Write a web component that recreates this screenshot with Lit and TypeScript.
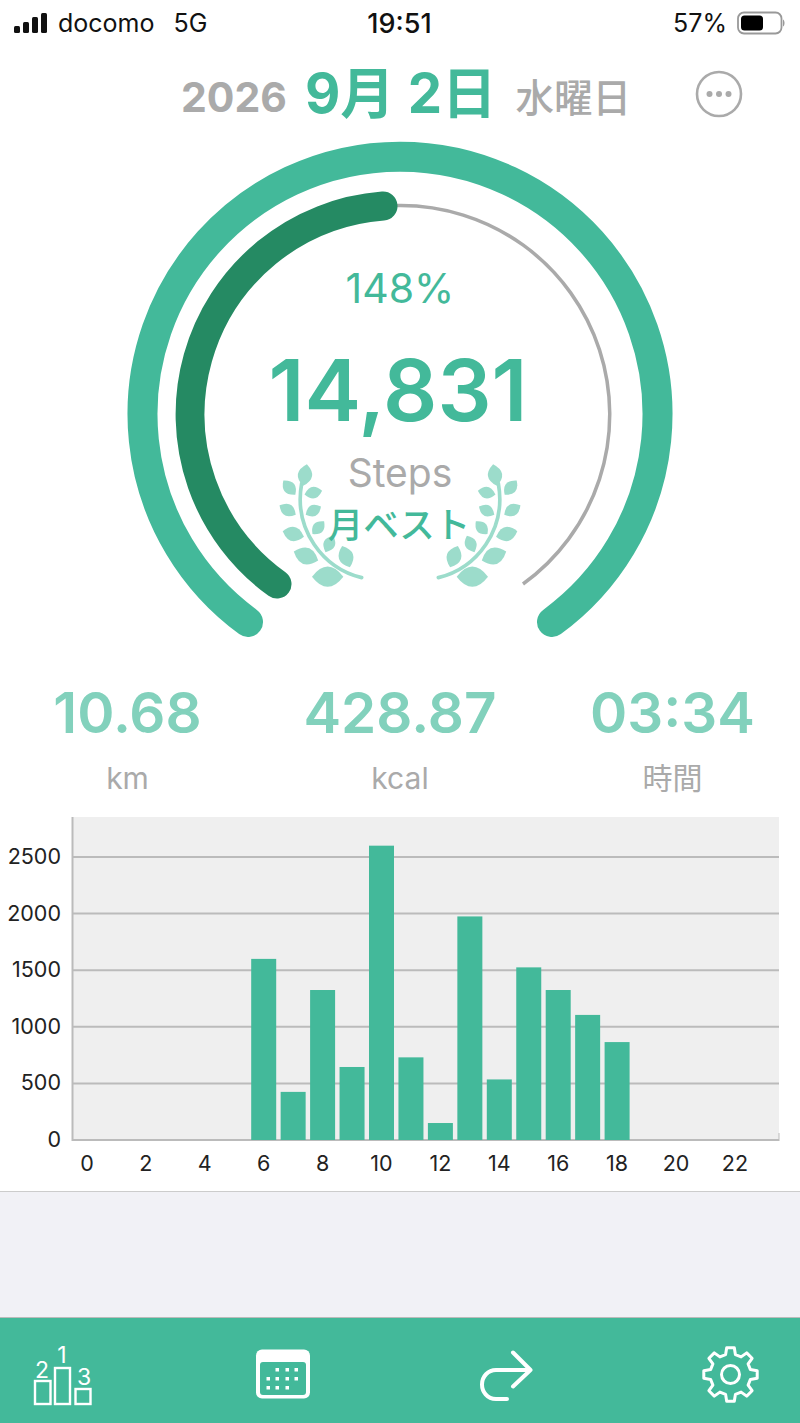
import { LitElement, html, css, svg } from "lit";
import { customElement } from "lit/decorators.js";

const BARS: [number, number][] = [[6,1600],[7,425],[8,1325],[9,645],[10,2600],[11,730],[12,150],[13,1975],[14,535],[15,1525],[16,1325],[17,1105],[18,865]];
const BASE = 1140;
const PER = 56.6 / 500;
const X0 = 87;
const STEP = 29.45;

const LEAVES: [number, number, number, number][] = [
  [135,105,33,-80],[88,143,28,50],[160,158,27,-12],[83,210,28,30],[160,212,26,-28],
  [100,282,33,15],[175,263,26,-48],[138,348,39,20],[208,312,27,-65],[258,350,34,70],[203,410,47,0],
];

function gearPath(cx: number, cy: number): string {
  const pts: string[] = [];
  const teeth = 8;
  const ro = 27;
  const ri = 20.5;
  for (let i = 0; i < teeth; i++) {
    const a = (i / teeth) * Math.PI * 2 - Math.PI / 2;
    const w = Math.PI / teeth;
    const at = (r: number, t: number) => `${(cx + r * Math.cos(t)).toFixed(1)} ${(cy + r * Math.sin(t)).toFixed(1)}`;
    pts.push(`${i ? "L" : "M"}${at(ri, a - w * 0.62)}`, `L${at(ro, a - w * 0.36)}`, `L${at(ro, a + w * 0.36)}`, `L${at(ri, a + w * 0.62)}`);
  }
  return pts.join(" ") + " Z";
}

@customElement("app-root")
export class AppRoot extends LitElement {
  static styles = css`
    :host { display: block; width: 800px; height: 1423px; background: #fff; overflow: hidden;
      font-family: Inter, "Noto Sans CJK JP", sans-serif; }
    svg { display: block; }
    .status { height: 46px; display: grid; grid-template-columns: 1fr auto 1fr; align-items: center; padding: 0 15px 0 14px; color: #111; font-size: 25px; }
    .st-left, .st-right { display: flex; align-items: center; }
    .st-left { gap: 10px; }
    .st-right { justify-content: flex-end; gap: 10px; }
    .carrier { margin-right: 9px; }
    .time { font-weight: 500; font-size: 27px; }
    .date { height: 84px; box-sizing: border-box; display: flex; align-items: center; padding: 12px 0 0 181px; }
    .year { font-size: 41px; font-weight: 700; color: #aaa; margin-top: 6px; }
    .day { font-size: 54.5px; font-weight: 700; color: #43b99a; margin: 0 0 9px 18px; font-family: Inter, "Noto Sans CJK JP", sans-serif; }
    .week { font-size: 38.5px; font-weight: 500; color: #aaa; margin: 2px 0 0 19px; font-family: "Noto Sans CJK JP", sans-serif; }
    .more { margin-left: 64px; }
    .stats { height: 140px; display: grid; grid-template-columns: repeat(3, 272.5px); justify-content: center; text-align: center; align-content: start; padding-top: 21px; box-sizing: border-box; }
    .num { font-size: 56.5px; font-weight: 600; color: #82d1bc; line-height: 64px; }
    .lab { font-size: 30px; color: #aaa; line-height: 40px; margin-top: 13px; font-family: Inter, "Noto Sans CJK JP", sans-serif; }
    .band { height: 126px; background: #f1f1f6; border-top: 1px solid #ccc; box-sizing: border-box; }
    .tabs { height: 106px; background: #43b99a; border-top: 1px solid #bbb; box-sizing: border-box; display: grid; grid-template-columns: 220px 225px 223px 60px; padding-left: 32px; align-items: center; }
    .g-pct { font-size: 41px; fill: #43b99a; text-anchor: middle; }
    .g-num { font-size: 85px; font-weight: 600; fill: #43b99a; text-anchor: middle; }
    .g-steps { font-size: 39px; fill: #aaa; text-anchor: middle; }
    .g-best { font-size: 35.500px; font-weight: 500; fill: #43b99a; text-anchor: middle; font-family: "Noto Sans CJK JP", sans-serif; }
    .leaf { fill: #9cdccb; }
    .stem { fill: none; stroke: #9cdccb; stroke-width: 11; stroke-linecap: round; }
    .tick { font-size: 21.5px; fill: #222; }
    .yt { text-anchor: end; }
    .xt { text-anchor: middle; }
    .ico { fill: none; stroke: #fff; stroke-width: 2.4; }
    .ico-num { font-size: 23px; fill: #fff; text-anchor: middle; }
    .ico-fill { fill: #fff; }
    .ico-green { fill: #43b99a; }
    .arrow { fill: none; stroke: #fff; stroke-width: 4; stroke-linecap: round; stroke-linejoin: round; }
    .gear { fill: none; stroke: #fff; stroke-width: 3; stroke-linejoin: round; }
  `;

  private laurel() {
    return svg`<g transform="translate(260 440) scale(.3333)">
      <path class="stem" d="M305 413 C190 385 100 270 125 130"/>
      ${LEAVES.map(([x, y, a, r]) => svg`<path class="leaf" transform="translate(${x} ${y}) rotate(${r})" d="M${-a} 0 Q0 ${-a * 1.3} ${a} 0 Q0 ${a * 1.3} ${-a} 0 Z"/>`)}
    </g>`;
  }

  private gauge() {
    return html`<svg width="800" height="530" viewBox="0 130 800 530">
      <path d="M248 622 A257.500 257.500 0 1 1 552 622" fill="none" stroke="#43b99a" stroke-width="30" stroke-linecap="round"/>
      <path d="M278 585 A209 209 0 0 1 400 205.500 A209 209 0 0 1 523 584" fill="none" stroke="#aaa" stroke-width="3.500"/>
      <path d="M277 584 A209 209 0 0 1 383 206" fill="none" stroke="#258a63" stroke-width="29" stroke-linecap="round"/>
      <text class="g-pct" x="400" y="303">148%</text>
      <text class="g-num" x="398" y="421">14,831</text>
      <text class="g-steps" x="400" y="487">Steps</text>
      ${this.laurel()}
      <g transform="translate(800 0) scale(-1 1)">${this.laurel()}</g>
      <text class="g-best" x="399" y="538">月ベスト</text>
    </svg>`;
  }

  private chart() {
    return html`<svg width="800" height="391" viewBox="0 800 800 391">
      <rect x="72" y="817" width="707" height="323" fill="#efefef"/>
      ${[500, 1000, 1500, 2000, 2500].map((v) => svg`<line x1="72" x2="779" y1=${BASE - v * PER} y2=${BASE - v * PER} stroke="#bbb" stroke-width="2"/>`)}
      <line x1="72.500" x2="72.500" y1="817" y2="1141" stroke="#bbb" stroke-width="2"/>
      <line x1="72" x2="779" y1="1140" y2="1140" stroke="#bbb" stroke-width="2"/>
      <line x1="779" x2="779" y1="1133" y2="1141" stroke="#bbb" stroke-width="1"/>
      ${BARS.map(([h, v]) => svg`<rect x=${X0 + h * STEP - 12.5} y=${BASE - v * PER} width="25" height=${v * PER} fill="#43b99a"/>`)}
      ${[0, 500, 1000, 1500, 2000, 2500].map((v) => svg`<text class="tick yt" x="61" y=${BASE - v * PER + 7}>${v}</text>`)}
      ${[0, 2, 4, 6, 8, 10, 12, 14, 16, 18, 20, 22].map((h) => svg`<text class="tick xt" x=${X0 + h * STEP} y="1171">${h}</text>`)}
    </svg>`;
  }

  private calendarDots() {
    const rows: [number, number[]][] = [[1369, [277, 287, 296]], [1378, [268, 277, 287, 296]], [1387, [268, 277, 287]]];
    return rows.flatMap(([y, xs]) => xs.map((x) => svg`<rect class="ico-fill" x=${x - 1.5} y=${y - 1.500} width="3.500" height="3.500"/>`));
  }

  render() {
    return html`
      <div class="status">
        <div class="st-left">
          <svg width="34" height="20" viewBox="0 0 34 20">
            <rect x="0" y="13" width="6" height="7" rx="1.500" fill="#111"/>
            <rect x="9" y="9" width="6" height="11" rx="1.500" fill="#111"/>
            <rect x="18" y="4" width="6" height="16" rx="1.500" fill="#111"/>
            <rect x="27" y="0" width="6" height="20" rx="1.500" fill="#111"/>
          </svg>
          <span class="carrier">docomo</span><span>5G</span>
        </div>
        <div class="time">19:51</div>
        <div class="st-right">
          <span>57%</span>
          <svg width="48" height="24" viewBox="0 0 48 24">
            <rect x="1" y="1.500" width="43.500" height="21" rx="6" fill="none" stroke="#999" stroke-width="1.800"/>
            <rect x="4" y="4.500" width="22" height="15" rx="3.500" fill="#000"/>
            <path d="M46 8.500 C48 9.500 48 14.500 46 15.500 Z" fill="#999"/>
          </svg>
        </div>
      </div>
      <div class="date">
        <span class="year">2026</span>
        <span class="day">9月 2日</span>
        <span class="week">水曜日</span>
        <svg class="more" width="48" height="48" viewBox="0 0 48 48">
          <circle cx="24" cy="24" r="22" fill="none" stroke="#aaa" stroke-width="2.600"/>
          <circle cx="14.500" cy="24" r="3" fill="#aaa"/><circle cx="24" cy="24" r="3" fill="#aaa"/><circle cx="33.500" cy="24" r="3" fill="#aaa"/>
        </svg>
      </div>
      ${this.gauge()}
      <div class="stats">
        <div><div class="num">10.68</div><div class="lab">km</div></div>
        <div><div class="num">428.87</div><div class="lab">kcal</div></div>
        <div><div class="num">03:34</div><div class="lab">時間</div></div>
      </div>
      ${this.chart()}
      <div class="band"></div>
      <div class="tabs">
        <svg width="60" height="70" viewBox="32 1335.500 60 70">
          <rect class="ico" x="35" y="1380.500" width="15.500" height="23"/>
          <rect class="ico" x="55" y="1367.500" width="15" height="36"/>
          <rect class="ico" x="75.500" y="1388.500" width="15" height="15"/>
          <text class="ico-num" x="62" y="1362">1</text>
          <text class="ico-num" x="42" y="1377">2</text>
          <text class="ico-num" x="84" y="1384">3</text>
        </svg>
        <svg width="60" height="70" viewBox="252 1335.500 60 70">
          <rect class="ico-fill" x="256" y="1349" width="54" height="49" rx="6"/>
          <rect class="ico-green" x="260" y="1361.500" width="46" height="33" rx="3"/>
          ${this.calendarDots()}
        </svg>
        <svg width="60" height="70" viewBox="478 1335.500 60 70">
          <path class="arrow" d="M508 1398.500 H497 C488 1398.500 483 1391 483 1384 C483 1376 489 1369.500 497 1369.500 H531.500 M514 1352 L531.500 1369.500 L514 1386"/>
        </svg>
        <svg width="60" height="70" viewBox="701 1335.500 60 70">
          <path class="gear" d=${gearPath(731.5, 1374)}/>
          <circle class="gear" cx="731.500" cy="1374" r="9"/>
        </svg>
      </div>
    `;
  }
}
